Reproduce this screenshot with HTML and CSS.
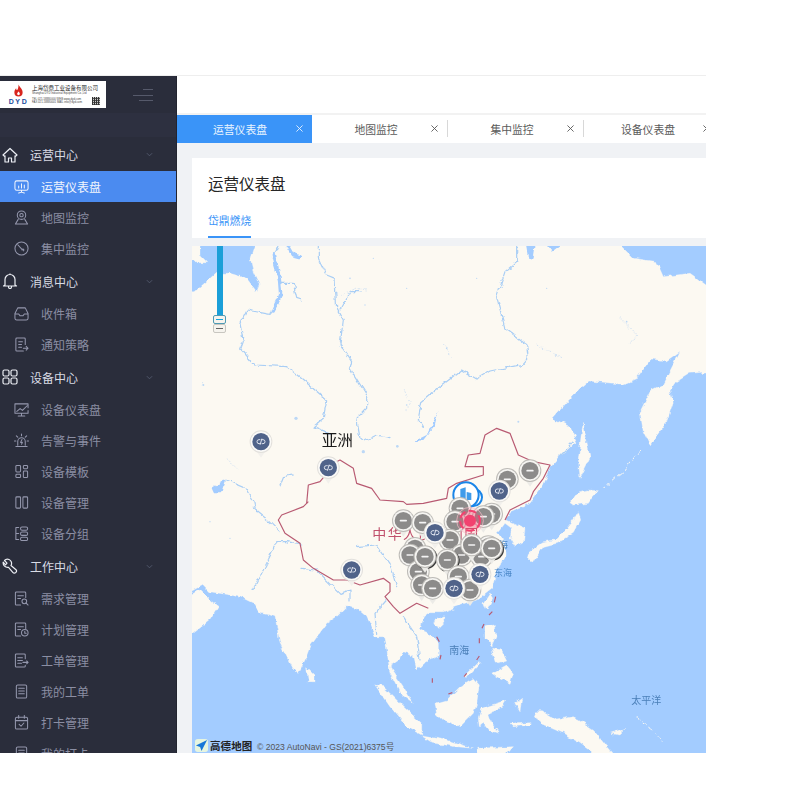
FILE: index.html
```html
<!DOCTYPE html>
<html lang="zh">
<head>
<meta charset="utf-8">
<title>运营仪表盘</title>
<link rel="stylesheet" href="styles.css">
</head>
<body>
<div class="app">
  <aside class="sidebar">
    <div class="side-top">
      <div class="logo">
        <div class="logo-mark">
          <svg class="logo-flame" viewBox="0 0 12 14"><path d="M6 0c1 3 4.500 4.500 4.500 8.500a4.500 4.500 0 0 1-9 0C1.500 6.500 2.500 5 3.500 4c0 1 .3 2 1 2C5.500 5 6 3 6 0z" fill="#d8261f"/><path d="M6 7.500c.8 1 1.500 1.500 1.500 2.500a1.500 1.500 0 0 1-3 0c0-1 1-1.500 1.500-2.500z" fill="#fff"/></svg>
          <span class="logo-dyd">DYD</span>
        </div>
        <div class="logo-body">
          <span class="logo-cn">上海岱鼎工业设备有限公司</span>
          <span class="logo-en">Shanghai DYD Industrial Equipment Co.,Ltd</span>
          <div class="logo-foot">
            <div class="logo-lines">
              <span class="logo-en">TEL 021-58880000 WEB www.dyd.com</span>
              <span class="logo-en">FAX 021-58880001 MAIL info@dyd.com</span>
            </div>
            <span class="logo-qr"></span>
          </div>
        </div>
      </div>
      <div class="burger"><i class="b1"></i><i class="b2"></i><i class="b3"></i></div>
    </div>
    <div class="side-band"></div>
    <nav class="menu">
      <div class="group"><svg class="gi" viewBox="0 0 16 16"><path d="M1 8l7-6.500L15 8l-1.500 1.300-.5-.5V15H9.500v-4h-3v4H3V8.800l-.5.500z"/></svg><span>运营中心</span><svg class="chev" viewBox="0 0 8 5"><path d="M1 1l3 3 3-3"/></svg></div>
      <div class="item active"><svg class="si" viewBox="0 0 16 16"><rect x="1" y="2" width="14" height="10" rx="2"/><path d="M8 12v2M5 15l3-1 3 1M5 9.500V7.500M8 9.500V5M11 9.500V6.500"/></svg><span>运营仪表盘</span></div>
      <div class="item"><svg class="si" viewBox="0 0 16 16"><circle cx="8" cy="5.500" r="4.500"/><circle cx="8" cy="5.500" r="1.800"/><path d="M4.500 10L1.500 15h13l-3-5"/></svg><span>地图监控</span></div>
      <div class="item"><svg class="si" viewBox="0 0 16 16"><circle cx="8" cy="8" r="7"/><path d="M4 4l5 5.500M10 10.500a1 1 0 1 0-1.500-1"/></svg><span>集中监控</span></div>

      <div class="group"><svg class="gi" viewBox="0 0 16 16"><path d="M3 12V6.500a5 5 0 0 1 10 0V12l1.500 1h-13zM6.500 13.500v.5a1.500 1.500 0 0 0 3 0v-.5M8 .5v1"/></svg><span>消息中心</span><svg class="chev" viewBox="0 0 8 5"><path d="M1 1l3 3 3-3"/></svg></div>
      <div class="item"><svg class="si" viewBox="0 0 16 16"><path d="M4 2h8l3 6v5a2 2 0 0 1-2 2H3a2 2 0 0 1-2-2V8zM1 8.500h4l1.500 2h3l1.500-2h4"/></svg><span>收件箱</span></div>
      <div class="item"><svg class="si" viewBox="0 0 16 16"><path d="M10 15H3a1 1 0 0 1-1-1V2a1 1 0 0 1 1-1h8a1 1 0 0 1 1 1v6M5 5h4M5 8h3M5 11h3M10 12h5M13 10l2 2-2 2"/></svg><span>通知策略</span></div>

      <div class="group"><svg class="gi" viewBox="0 0 16 16"><rect x="1" y="1" width="6" height="6" rx="1.500"/><rect x="9" y="1" width="6" height="6" rx="1.500"/><rect x="1" y="9" width="6" height="6" rx="1.500"/><rect x="9" y="9" width="6" height="6" rx="1.500"/></svg><span>设备中心</span><svg class="chev" viewBox="0 0 8 5"><path d="M1 1l3 3 3-3"/></svg></div>
      <div class="item"><svg class="si" viewBox="0 0 16 16"><path d="M15 6V2H1v10h14V9M8 12v2.500M4.500 15h7M3 10l3.500-3L9 9l5-5"/></svg><span>设备仪表盘</span></div>
      <div class="item"><svg class="si" viewBox="0 0 16 16"><path d="M4 13V9a4 4 0 0 1 8 0v4M2 14.500h12M8.500 7L7 10h2l-1 2M8 1v2M2.500 3l1.500 1.500M13.500 3L12 4.500M.5 8.500h1.500M14 8.500h1.500"/></svg><span>告警与事件</span></div>
      <div class="item"><svg class="si" viewBox="0 0 16 16"><rect x="2" y="1.500" width="5" height="7" rx="1"/><rect x="2" y="11" width="5" height="3.500" rx="1"/><rect x="10" y="1.500" width="4.500" height="3.500" rx="1"/><rect x="10" y="7.500" width="4.500" height="7" rx="1"/></svg><span>设备模板</span></div>
      <div class="item"><svg class="si" viewBox="0 0 16 16"><rect x="2" y="2" width="5" height="12" rx="1"/><rect x="9.500" y="2" width="5" height="12" rx="1"/></svg><span>设备管理</span></div>
      <div class="item"><svg class="si" viewBox="0 0 16 16"><rect x="7" y="1" width="7.500" height="3.500" rx="1.500"/><rect x="7" y="6.500" width="7.500" height="3.500" rx="1.500"/><rect x="7" y="12" width="7.500" height="3.500" rx="1.500"/><path d="M5 1.500H2v13h3M2 8h3"/></svg><span>设备分组</span></div>

      <div class="group"><svg class="gi" viewBox="0 0 16 16"><path d="M7 1.500a4 4 0 0 0-4.500 1L5 5.200 3.500 6.800 1.200 4.200A4.500 4.500 0 0 0 6.500 9.300l4.300 5a2 2 0 0 0 3.200-2.600L9 7.500A4.200 4.200 0 0 0 7 1.500z"/></svg><span>工作中心</span><svg class="chev" viewBox="0 0 8 5"><path d="M1 1l3 3 3-3"/></svg></div>
      <div class="item"><svg class="si" viewBox="0 0 16 16"><path d="M7 15H2.500a1 1 0 0 1-1-1V2a1 1 0 0 1 1-1h9a1 1 0 0 1 1 1v5M4 5h6M4 8h3"/><circle cx="11" cy="11" r="2.500"/><path d="M13 13l2 2"/></svg><span>需求管理</span></div>
      <div class="item"><svg class="si" viewBox="0 0 16 16"><path d="M7 15H2.500a1 1 0 0 1-1-1V2a1 1 0 0 1 1-1h9a1 1 0 0 1 1 1v5M4 5h6M4 8h3"/><circle cx="11.500" cy="11.500" r="3.500"/><path d="M11.500 10v2h1.500"/></svg><span>计划管理</span></div>
      <div class="item"><svg class="si" viewBox="0 0 16 16"><path d="M12 6V2a1 1 0 0 0-1-1H2.500a1 1 0 0 0-1 1v12a1 1 0 0 0 1 1H11a1 1 0 0 0 1-1v-1M4 5h5M4 8h5M4 11h4M9.500 10H15M13.500 8.500L15 10l-1.500 1.500"/></svg><span>工单管理</span></div>
      <div class="item"><svg class="si" viewBox="0 0 16 16"><rect x="2.500" y="1" width="11" height="14" rx="1.500"/><path d="M5 4.500h6M5 7.500h6M5 10.500h6"/></svg><span>我的工单</span></div>
      <div class="item"><svg class="si" viewBox="0 0 16 16"><rect x="1.500" y="2.500" width="13" height="12.500" rx="1.500"/><path d="M1.500 6h13M5 .5v3M11 .5v3M5.500 10l2 2 3-3.500"/></svg><span>打卡管理</span></div>
      <div class="item"><svg class="si" viewBox="0 0 16 16"><rect x="2.500" y="1" width="11" height="14" rx="1.500"/><path d="M5 4.500h6M5 7.500h6"/></svg><span>我的打卡</span></div>
    </nav>
  </aside>

  <main class="main">
    <header class="topbar"></header>
    <div class="tabs">
      <div class="tab tab-active"><span>运营仪表盘</span><svg class="x" viewBox="0 0 8 8"><path d="M.5.500l7 7M7.500.500l-7 7"/></svg></div>
      <div class="tab tab-sep"><span>地图监控</span><svg class="x" viewBox="0 0 8 8"><path d="M.5.500l7 7M7.500.500l-7 7"/></svg></div>
      <div class="tab tab-sep"><span>集中监控</span><svg class="x" viewBox="0 0 8 8"><path d="M.5.500l7 7M7.500.500l-7 7"/></svg></div>
      <div class="tab"><span>设备仪表盘</span><svg class="x" viewBox="0 0 8 8"><path d="M.5.500l7 7M7.500.500l-7 7"/></svg></div>
    </div>
    <div class="content">
      <section class="card">
        <h1 class="title">运营仪表盘</h1>
        <div class="subtabs"><span class="subtab">岱鼎燃烧</span></div>
      </section>
      <section class="map">
        <svg class="map-svg" viewBox="6 3 1542 1521" preserveAspectRatio="none">
          <defs>
            <filter id="rough" filterUnits="userSpaceOnUse" x="-20" y="-20" width="1600" height="1560">
              <feTurbulence type="fractalNoise" baseFrequency="0.045" numOctaves="3" seed="4" result="n"/>
              <feDisplacementMap in="SourceGraphic" in2="n" scale="16" xChannelSelector="R" yChannelSelector="G"/>
            </filter>
            <g id="g">
              <path d="M-14 28L0 48 14 28z" fill="#ecebe7"/>
              <circle r="34" fill="#bdbbb7"/>
              <circle r="31" fill="#f6f5f2"/>
              <circle r="26" fill="#8c8b8a"/>
              <rect x="-11" y="-2.500" width="22" height="5" rx="2.500" fill="#f4f4f4"/>
            </g>
            <g id="d">
              <circle cx="3" cy="3" r="34" fill="#3a3a3a"/>
              <use href="#g"/>
            </g>
            <g id="b">
              <path d="M-14 28L0 48 14 28z" fill="#f2f0ec"/>
              <circle r="34" fill="#e2e0dc"/>
              <circle r="31" fill="#fbfaf8"/>
              <circle r="26" fill="#50638a"/>
              <path d="M-2 -6H-6a6 6 0 0 0 0 12H-2M2 -6H6a6 6 0 0 1 0 12H2M2.500 -9L-2.500 9" fill="none" stroke="#e8ecf4" stroke-width="2.800"/>
            </g>
          </defs>

          <rect class="sea" x="6" y="3" width="1542" height="1521"/>

          <g filter="url(#rough)">
            <path class="land" d="M200 -20L1270 -20 1330 40 1400 50 1420 95 1500 85 1515 95 1548 120 1580 120 1580 378 1500 385 1460 410 1440 440 1450 470 1430 530 1380 600 1360 560 1350 500 1380 440 1420 420 1470 322 1430 350 1380 345 1340 400 1300 418 1200 408 1150 450 1088 520 1140 545 1160 590 1110 630 1085 660 1060 720 1020 775 960 800 945 825 950 825 1005 850 1000 895 975 905 960 880 965 850 945 835 930 855 920 865 945 885 945 935 920 975 905 1030 860 1065 800 1085 760 1100 720 1100 700 1115 690 1155 725 1170 745 1195 745 1230 700 1255 680 1275 670 1230 640 1220 630 1245 600 1265 640 1325 670 1375 630 1345 600 1285 585 1175 555 1175 530 1115 500 1090 470 1085 440 1115 410 1135 360 1205 345 1245 325 1285 305 1265 270 1195 255 1115 240 1110 210 1105 190 1075 150 1055 60 1040 40 1020 -20 1055 -20 150 30 130 80 85 120 85 170 100 200 140 208 120 190 80 180 40z"/>
            <path class="land" d="M-20 -20H30V30L50 50H-20z"/>
            <path class="land" d="M-20 1065L30 1035 60 1065 85 1085 60 1125 10 1165-20 1165z"/>
            <g transform="translate(0 765)">
              <path class="land" d="M350 500L375 525 375 545 355 545z"/>
              <path class="land" d="M1165 35L1172 60 1150 100 1100 130 1060 140 1030 190 1010 170 1015 155 1060 125 1095 120 1130 85 1150 60z"/>
              <path class="land" d="M1140 8L1165-25 1190-30 1225-28 1205-5 1195 10 1150 15z"/>
              <path class="land" d="M900 282L908 295 890 330 882 310z"/>
              <path class="land" d="M735 362L760 350 762 365 745 382 730 375z"/>
              <path class="land" d="M555 555L580 560 640 620 695 670 695 705 650 680 600 620z"/>
              <path class="land" d="M695 708L770 720 850 745 800 740 730 730z"/>
              <path class="land" d="M735 610L770 600 810 560 850 535 868 555 860 610 850 640 810 680 760 660 740 640z"/>
              <path class="land" d="M875 625L950 600 935 625 895 640 905 670 925 700 895 690 880 670 868 680 865 655z"/>
              <path class="land" d="M885 380L912 375 918 410 905 440 885 415z"/>
              <path class="land" d="M905 520L950 495 970 520 960 550 920 530z"/>
              <path class="land" d="M820 530L865 485 870 490 830 532z"/>
              <path class="land" d="M905 445L935 450 950 480 920 490z"/>
              <path class="land" d="M1030 635L1060 635 1100 660 1150 650 1210 690 1250 740 1280 775 1230 775 1170 730 1120 700 1050 670z"/>
              <path class="land" d="M1260 700L1310 685 1290 705z"/>
              <path class="land" d="M960 670L1020 665 1020 675 970 680z"/>
              <path class="land" d="M975 610L995 595 990 635z"/>
              <path class="land" d="M860 745L970 740 940 775 870 775z"/>
            </g>
            <path class="land" d="M1180 535L1200 640 1170 700 1165 640 1175 560z"/>
            <polyline class="isle" points="1350 615 1300 680 1240 730"/>
            <polyline class="isle" points="1340 1420 1380 1450 1420 1490"/>

            <path class="water" d="M1005 -20H1040L1030 45 1015 40zM1055 -20H1140L1085 20zM670 590L710 570 745 500 735 540 700 585zM65 730L110 700 95 745 72 745z"/>
            <g class="river">
              <polyline points="265 0 250 40 265 100 275 140 260 185 240 208 170 195 150 235 160 290 152 312 195 360 290 365 340 405 410 465 400 520 370 545 420 565"/>
              <polyline class="fat" points="253 30 268 100 272 150 250 198"/>
              <polyline points="270 115 310 115 320 160 335 165"/>
              <polyline class="fat" points="295 5 310 30 330 35"/>
              <polyline points="385 0 385 40 410 90 435 100 440 190 460 225 450 300 485 350 480 370 530 450 530 490 500 520 510 580 520 590 560 570 600 578"/>
              <polyline points="980 0 980 50 945 80 920 155 945 250 1010 300 1015 340 1000 358 900 378 860 402 815 375 750 425 695 470 685 520 700 545"/>
              <polyline points="270 720 280 695 310 690"/>
              <polyline points="110 705 170 730 195 775 200 800"/>
              <polyline points="450 195 480 140 510 140"/>
              <polyline points="190 1035 230 955 260 890 290 890 335 900"/>
              <polyline points="330 970 380 975 450 1045 480 1035 480 1065"/>
              <polyline points="500 905 560 900 600 955 620 1025"/>
              <polyline points="590 1065 555 1105 560 1165"/>
              <polyline points="640 1115 680 1175 690 1245"/>
              <polyline points="190 790 240 830 270 860"/>
              <polyline points="1110 630 1150 590"/>
            </g>
            <g class="faint">
              <polyline points="1290 220 1340 270 1320 300"/>
              <polyline points="1040 300 1100 330 1120 340"/>
              <polyline points="760 300 790 340"/>
              <polyline points="640 430 660 470 645 500"/>
              <polyline points="450 150 500 130 530 135"/>
              <polyline points="110 640 140 670"/>
              <polyline points="30 420 45 410"/>
            </g>
          </g>
          <g class="specks">
            <circle cx="318" cy="520" r="5"/><circle cx="520" cy="620" r="5"/><circle cx="622" cy="604" r="4"/><circle cx="985" cy="530" r="3"/>
            <circle cx="40" cy="420" r="3"/><circle cx="650" cy="480" r="2.500"/><circle cx="770" cy="310" r="2.500"/><circle cx="1310" cy="230" r="2.500"/>
            <circle cx="550" cy="40" r="2"/><circle cx="650" cy="130" r="2"/><circle cx="860" cy="100" r="2"/><circle cx="1070" cy="130" r="2"/>
            <circle cx="480" cy="100" r="2.500"/><circle cx="525" cy="180" r="2"/><circle cx="60" cy="830" r="2"/><circle cx="120" cy="880" r="2"/>
          </g>

          <path class="border" d="M350 775L355 720 390 710 440 650 450 645 490 670 500 715 545 730 570 765 640 770 650 778 700 775 770 760 775 730 800 715 880 690 880 665 825 665 835 630 870 625 885 570 920 550 960 565 985 630 1030 650 1080 660 1060 700 1030 740 1020 765 960 795 945 825"/>
          <path class="border" d="M355 770L340 785 275 810 265 825 285 865 330 895 340 945 370 970 430 1005 470 1005 510 1020 580 1000 600 1015 600 1040 585 1055 610 1085 630 1105 680 1075 715 1090"/>
          <g class="dash">
            <path d="M917 1055L913 1072M907 1100L897 1110M882 1137L876 1150M868 1180V1195M868 1233L860 1245M830 1285L822 1295M787 1343L775 1347M727 1300V1313M753 1230L750 1243M740 1175L748 1190"/>
          </g>

          <text class="lbl lbl-black" x="395" y="602">亚洲</text>
          <text class="lbl lbl-red" x="547" y="883">中华人民共和国</text>
          <text class="lbl lbl-sea" x="900" y="910">黄海</text>
          <text class="lbl lbl-sea" x="912" y="993">东海</text>
          <text class="lbl lbl-sea2" x="778" y="1228">南海</text>
          <text class="lbl lbl-sea2" x="1324" y="1378">太平洋</text>

          <use href="#b" x="213" y="590"/>
          <use href="#b" x="415" y="668"/>
          <use href="#b" x="485" y="975"/>

          <g transform="translate(570 615)">
            <use href="#g" x="450" y="62"/>
            <use href="#g" x="382" y="88"/>
            <use href="#b" x="358" y="123"/>
            <g class="bld">
              <circle cx="280" cy="142" r="26"/>
              <circle cx="258" cy="135" r="38"/>
              <path class="bld-i" d="M241 117l16-5v38h-16zM260 126l14 3v21h-14z"/>
            </g>
            <use href="#g" x="240" y="175"/>
            <use href="#g" x="335" y="192"/>
            <use href="#g" x="310" y="200"/>
            <use href="#g" x="225" y="215"/>
            <use href="#g" x="70" y="212"/>
            <use href="#g" x="128" y="218"/>
            <use href="#g" x="210" y="270"/>
            <use href="#d" x="325" y="290"/>
            <use href="#g" x="105" y="295"/>
            <use href="#g" x="90" y="315"/>
            <use href="#g" x="245" y="315"/>
            <use href="#g" x="305" y="320"/>
            <use href="#g" x="275" y="285"/>
            <use href="#d" x="335" y="295"/>
            <use href="#b" x="165" y="248"/>
            <use href="#g" x="115" y="365"/>
            <use href="#d" x="135" y="320"/>
            <use href="#d" x="202" y="330"/>
            <use href="#g" x="125" y="405"/>
            <use href="#g" x="235" y="380"/>
            <use href="#g" x="158" y="415"/>
            <use href="#g" x="270" y="420"/>
            <use href="#b" x="300" y="373"/>
            <use href="#b" x="222" y="415"/>
            <g class="alarm">
              <circle cx="270" cy="212" r="40"/>
              <circle class="alarm-d" cx="270" cy="212" r="30"/>
              <circle class="alarm-c" cx="270" cy="212" r="18"/>
            </g>
          </g>
        </svg>
        <div class="zoom-rail"></div>
        <div class="zoom-btns"><span class="zb zb-on"><i></i></span><span class="zb"><i></i></span></div>
        <div class="amap">
          <svg class="amap-i" viewBox="0 0 14 14"><rect width="14" height="14" rx="3" fill="#e6f5e0"/><path d="M13 1L1 7l4.500 1.500L7 13z" fill="#1677d8"/></svg>
          <span class="amap-t">高德地图</span>
          <span class="amap-c">© 2023 AutoNavi - GS(2021)6375号</span>
        </div>
      </section>
    </div>
  </main>
</div>
</body>
</html>
```
FILE: styles.css
```css
* { box-sizing: border-box; }
html, body { margin: 0; padding: 0; background: #fff; }
body { font-family: "Noto Sans CJK SC", "Noto Sans", sans-serif; }

.app { margin-top: 75px; width: 706px; height: 678px; display: flex; overflow: hidden; border-top: 1px solid #eeeeee; }

/* Sidebar */
.sidebar { width: 177px; flex: none; background: #2a2d3b; color: #8b8ea3; overflow: hidden; border-right: 1px solid #22242f; }
.side-top { height: 37px; padding-top: 5px; display: flex; background: #2a2d3b; }
.side-band { height: 24px; background: #2d3040; }
.logo { width: 106px; height: 27px; background: #fff; display: flex; padding: 3px 0 0 7px; gap: 2px; overflow: hidden; }
.logo-mark { width: 23px; flex: none; display: flex; flex-direction: column; align-items: center; }
.logo-flame { width: 11px; height: 14px; flex: none; display: block; }
.logo-dyd { font: 700 7px/6px "Liberation Sans", sans-serif; color: #1d4fa0; letter-spacing: 1.600px; margin-top: 1px; }
.logo-body { width: 70px; flex: none; display: flex; flex-direction: column; }
.logo-cn { font-size: 5.500px; line-height: 8px; color: #222; white-space: nowrap; }
.logo-en { display: block; font: 2.800px/3.500px "Liberation Sans", sans-serif; color: #444; white-space: nowrap; }
.logo-foot { display: flex; justify-content: space-between; margin-top: 1px; }
.logo-lines { display: flex; flex-direction: column; padding-top: 1px; }
.logo-qr { width: 8px; height: 8px; flex: none; margin-right: 2px; background: repeating-linear-gradient(90deg, #333 0 1px, transparent 1px 2px), repeating-linear-gradient(0deg, #555 0 1px, #ccc 1px 2px); }
.burger { margin-left: 27px; margin-top: 8px; width: 20px; height: 14px; display: flex; flex-direction: column; align-items: flex-end; gap: 4.500px; }
.burger i { display: block; height: 1px; background: #565a6b; }
.b1 { width: 10px; }
.b2 { width: 20px; }
.b3 { width: 14px; }

.menu { display: flex; flex-direction: column; }
.group { height: 34px; flex: none; display: flex; align-items: center; padding-left: 2px; font-size: 12px; color: #d9dbe4; }
.group:first-child { height: 33px; margin-top: 1px; }
.gi { width: 16px; height: 16px; margin-right: 12px; flex: none; fill: none; stroke: #eceef4; stroke-width: 1.200; stroke-linejoin: round; }
.chev { width: 7px; height: 5px; margin-left: auto; margin-right: 23px; fill: none; stroke: #565b70; stroke-width: 1; }
.item { height: 31px; flex: none; display: flex; align-items: center; padding-left: 14px; font-size: 12px; color: #8b8ea3; }
.si { width: 15px; height: 15px; margin-right: 12px; flex: none; fill: none; stroke: #9598ae; stroke-width: 1.100; stroke-linejoin: round; stroke-linecap: round; }
.active { background: #4b8bf0; color: #f1f5fd; }
.active .si { stroke: #f1f5fd; }

/* Main */
.main { flex: 1; min-width: 0; display: flex; flex-direction: column; background: #f0f2f5; }
.topbar { height: 39px; flex: none; background: #fff; border-bottom: 2px solid #f2f2f2; }
.tabs { height: 28px; flex: none; display: flex; background: #fff; overflow: hidden; }
.tab { width: 136px; flex: none; display: flex; align-items: center; justify-content: center; position: relative; font-size: 10.800px; color: #5a5a5a; padding-right: 8px; }
.tab-active { width: 135px; background: #3a94f8; color: #eaf4ff; padding-right: 9px; }
.tab-active .x { stroke: #eaf4ff; right: 9px; }
.tab-sep::after { content: ""; position: absolute; right: 0; top: 5px; bottom: 6px; width: 1px; background: #d8d8d8; }
.x { position: absolute; right: 10px; top: 10px; width: 7px; height: 7px; fill: none; stroke: #555; stroke-width: 1; }

.content { flex: 1; min-height: 0; padding: 15px 0 0 15px; display: flex; flex-direction: column; gap: 8px; }
.card { height: 80px; flex: none; background: #fff; padding-left: 16px; overflow: hidden; }
.title { margin: 12px 0 0; font-size: 15.500px; line-height: 26px; font-weight: 400; color: #262626; }
.subtabs { margin-top: 13px; display: flex; }
.subtab { font-size: 10.800px; line-height: 22px; height: 29px; color: #3a94f8; border-bottom: 2px solid #3a94f8; width: 43px; white-space: nowrap; }

/* Map */
.map { flex: 1; min-height: 0; position: relative; overflow: hidden; background: #a3ccff; }
.map-svg { display: block; width: 100%; height: 100%; filter: blur(.3px); }
.sea { fill: #a3ccff; }
.land { fill: #fcf9f2; stroke: #fcf9f2; stroke-width: 1; stroke-linejoin: round; }
.isle { fill: none; stroke: #fcf9f2; stroke-width: 3; stroke-dasharray: 14 8; }
.water { fill: #a3ccff; }
.river polyline { fill: none; stroke: #a9cef5; stroke-width: 3.600; stroke-linejoin: round; stroke-linecap: round; }
.river .fat { stroke-width: 10; stroke: #a3ccff; }
.faint polyline { fill: none; stroke: #d5e4f2; stroke-width: 3; stroke-dasharray: 5 5; }
.specks circle { fill: #bcd8f6; }
.border { fill: none; stroke: #b85a72; stroke-width: 3.500; stroke-linejoin: round; }
.dash path { fill: none; stroke: #b85a72; stroke-width: 3.500; }
.lbl { font-family: "Noto Sans CJK SC", sans-serif; }
.lbl-black { font-size: 47px; fill: #1a1a1a; }
.lbl-red { font-size: 42px; letter-spacing: 4px; fill: #c0506c; }
.lbl-sea { font-size: 27px; fill: #4a87c8; }
.lbl-sea2 { font-size: 30px; fill: #4a7fb8; }
.bld circle { fill: #fff; stroke: #1a85e8; stroke-width: 6; }
.bld-i { fill: #3f9bea; }
.alarm circle { fill: rgba(245, 70, 110, .12); stroke: #f8c3cf; stroke-width: 2; }
.alarm .alarm-d { fill: rgba(245, 70, 110, .3); stroke: #f2426f; stroke-width: 6; stroke-dasharray: 24 10; }
.alarm .alarm-c { fill: #f2426f; stroke: none; }

.zoom-rail { position: absolute; left: 25px; top: 0; width: 5.500px; height: 69px; background: #1b9fd8; }
.zoom-btns { position: absolute; left: 21px; top: 69px; width: 13px; display: flex; flex-direction: column; }
.zb { height: 9px; background: #f6f4ee; border: 1px solid #c8c6c0; border-radius: 2px; display: flex; align-items: center; justify-content: center; }
.zb i { display: block; width: 7px; height: 1.500px; background: #666; }
.zb-on { border-color: #4f9bb4; }
.zb-on i { background: #19a6dc; }

.amap { position: absolute; left: 3px; bottom: 1px; height: 14px; display: flex; align-items: center; }
.amap-i { width: 13px; height: 13px; flex: none; margin-right: 2px; }
.amap-t { font-size: 10.500px; font-weight: 700; color: #222; width: 47px; white-space: nowrap; letter-spacing: .1px; }
.amap-c { font: 8.600px "Liberation Sans", "Noto Sans CJK SC", sans-serif; color: #555; white-space: nowrap; position: relative; top: 1px; }
```
